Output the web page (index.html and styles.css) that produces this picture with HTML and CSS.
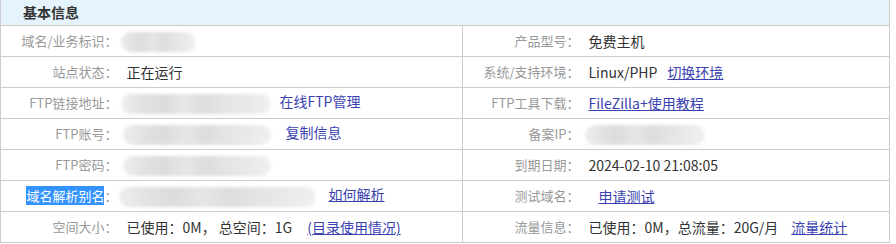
FILE: index.html
```html
<!DOCTYPE html>
<html lang="zh">
<head>
<meta charset="utf-8">
<title>基本信息</title>
<link rel="stylesheet" href="styles.css">
</head>
<body>
<table class="info">
  <colgroup>
    <col class="c-lbl"><col class="c-val"><col class="c-lbl2"><col>
  </colgroup>
  <tr class="head"><th colspan="4">基本信息</th></tr>
  <tr>
    <td class="lbl">域名/业务标识：</td>
    <td class="val"><span class="blob b1"></span></td>
    <td class="lbl mid">产品型号：</td>
    <td class="val">免费主机</td>
  </tr>
  <tr>
    <td class="lbl">站点状态：</td>
    <td class="val">正在运行</td>
    <td class="lbl mid">系统/支持环境：</td>
    <td class="val">Linux/PHP<a class="link u gap-env" href="#">切换环境</a></td>
  </tr>
  <tr>
    <td class="lbl">FTP链接地址：</td>
    <td class="val"><span class="blob b3"></span><a class="link gap-ftp" href="#">在线FTP管理</a></td>
    <td class="lbl mid">FTP工具下载：</td>
    <td class="val"><a class="link u" href="#">FileZilla+使用教程</a></td>
  </tr>
  <tr>
    <td class="lbl">FTP账号：</td>
    <td class="val"><span class="blob b4"></span><a class="link gap-copy" href="#">复制信息</a></td>
    <td class="lbl mid">备案IP：</td>
    <td class="val"><span class="blob b8"></span></td>
  </tr>
  <tr>
    <td class="lbl">FTP密码：</td>
    <td class="val"><span class="blob b4"></span></td>
    <td class="lbl mid">到期日期：</td>
    <td class="val">2024-02-10 21:08:05</td>
  </tr>
  <tr>
    <td class="lbl"><span class="sel">域名解析别名</span>：</td>
    <td class="val"><span class="blob b6"></span><a class="link u gap-dns" href="#">如何解析</a></td>
    <td class="lbl mid">测试域名：</td>
    <td class="val"><a class="link u gap-test" href="#">申请测试</a></td>
  </tr>
  <tr>
    <td class="lbl">空间大小：</td>
    <td class="val">已使用：0M， 总空间：1G<a class="link u gap-dir" href="#">(目录使用情况)</a></td>
    <td class="lbl mid">流量信息：</td>
    <td class="val">已使用：0M，总流量：20G/月<a class="link u gap-flow" href="#">流量统计</a></td>
  </tr>
</table>
</body>
</html>
```

FILE: styles.css
```css
html, body {
  margin: 0;
  padding: 0;
  background: #ffffff;
}

body {
  font-family: "Noto Sans CJK SC", "Noto Sans", sans-serif;
  font-size: 13px;
  color: #333333;
}

.info {
  width: 890px;
  border-collapse: collapse;
  table-layout: fixed;
  border-left: 1px solid #cccccc;
  border-right: 1px solid #cccccc;
  border-bottom: 1px solid #cccccc;
}

.c-lbl { width: 117px; }
.c-val { width: 345px; }
.c-lbl2 { width: 117px; }

.head th {
  height: 25px;
  padding: 0 0 0 22px;
  background: #e5f3fc;
  text-align: left;
  font-size: 14px;
  font-weight: bold;
  color: #333333;
  border-bottom: 1px solid #cccccc;
  line-height: 25px;
}

.info td {
  height: 30px;
  padding: 0;
  border-top: 1px solid #cccccc;
  white-space: nowrap;
  vertical-align: middle;
  line-height: 18px;
}

.lbl {
  text-align: right;
  color: #999999;
  font-size: 13px;
}

.mid {
  border-left: 1px solid #cccccc;
}

.val {
  padding-left: 9px !important;
  color: #333333;
  font-size: 14px;
}

.link {
  color: #3a42b0;
  text-decoration: none;
}

.link.u {
  text-decoration: underline;
}

.gap-env { margin-left: 10px; }
.gap-ftp { margin-left: 9px; }
.gap-copy { margin-left: 15px; }
.gap-dns { margin-left: 13px; }
.gap-test { margin-left: 10px; }
.gap-dir { margin-left: 15px; }
.gap-flow { margin-left: 13px; }

.sel {
  background: #3393ff;
  color: #ffffff;
}

.blob {
  display: inline-block;
  vertical-align: middle;
  height: 20px;
  margin-left: -6px;
  border-radius: 10px;
  filter: blur(1.5px);
  background: linear-gradient(90deg,
    #eeeeee 0%, #e2e2e2 14%, #dcdcdc 28%, #e6e6e6 42%,
    #dddddd 56%, #e4e4e4 70%, #e9e9e9 84%, #f0f0f0 100%);
}

.b1 { width: 75px; }
.b3 { width: 150px; }
.b4 { width: 148px; margin-left: -4px; }
.b6 { width: 197px; margin-left: -8px; }
.b8 { width: 120px; margin-left: -4px; }
```
